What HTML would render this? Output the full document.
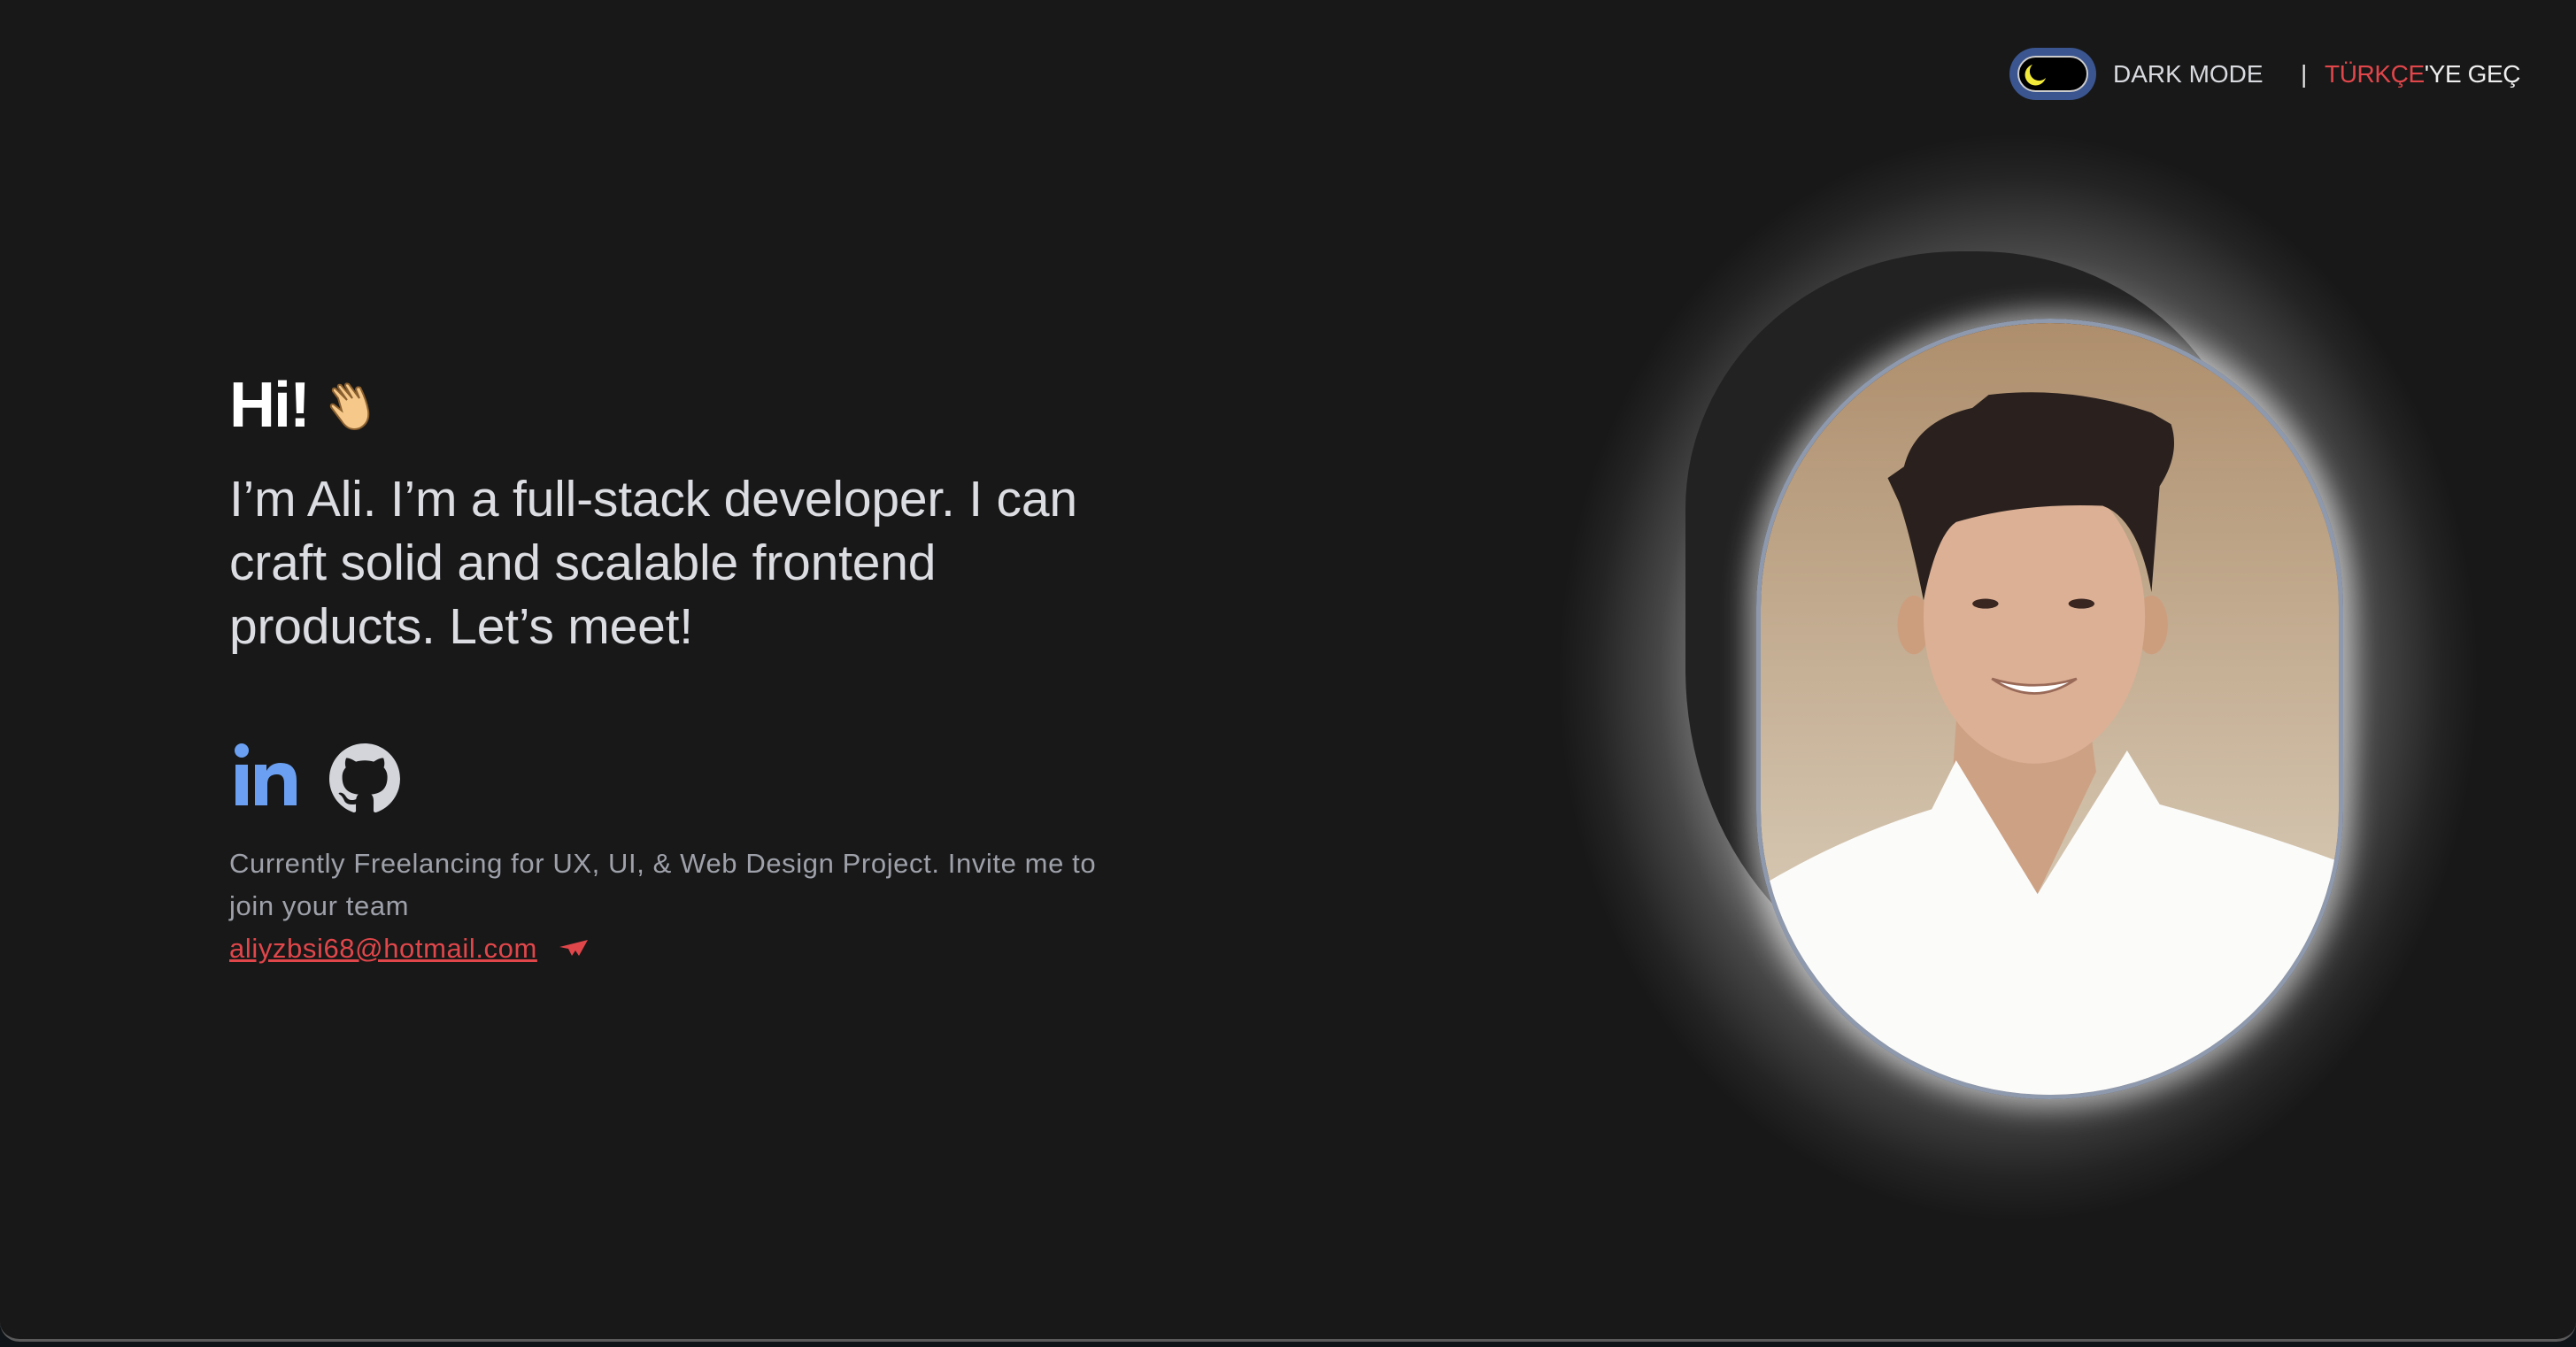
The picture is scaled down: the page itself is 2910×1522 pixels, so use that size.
<!DOCTYPE html>
<html><head><meta charset="utf-8"><style>
html,body{margin:0;padding:0;background:#0f1418;}
body{width:2910px;height:1522px;position:relative;overflow:hidden;font-family:"Liberation Sans",sans-serif;}
.win{position:absolute;left:0;top:0;width:2910px;height:1516px;background:#181818;border-radius:0 0 22px 22px;border-bottom:3px solid #5a5a5a;box-sizing:border-box;overflow:hidden;}
.abs{position:absolute;white-space:nowrap;}
.glow{position:absolute;left:1760px;top:150px;width:1040px;height:1230px;border-radius:50%;background:radial-gradient(ellipse closest-side at center,rgba(255,255,255,0.55) 0%,rgba(255,255,255,0.5) 62%,rgba(255,255,255,0.2) 78%,rgba(255,255,255,0.05) 92%,rgba(255,255,255,0) 100%);}
.back{position:absolute;left:1904px;top:284px;width:640px;height:840px;background:#222;border-radius:320px 320px 330px 330px/300px 300px 380px 380px;}
.oval{position:absolute;left:1984px;top:360px;width:663px;height:882px;border:5px solid #8e99ad;box-sizing:border-box;border-radius:50%/37%;overflow:hidden;box-shadow:0 0 30px 10px rgba(255,255,255,0.55);}
</style></head><body>
<div class="win">
<div class="abs" style="left:2270px;top:54px;width:98px;height:59px;border-radius:30px;background:#3a5590;"></div>
<div class="abs" style="left:2279px;top:63px;width:80px;height:41px;border-radius:21px;background:#000;border:2px solid #ccc;box-sizing:border-box;"></div>
<svg class="abs" style="left:2284px;top:70px" width="30" height="30" viewBox="0 0 30 30"><path d="M12 3 A12 12 0 1 0 27 18 A9 9 0 0 1 12 3Z" fill="#f2ea3a"/></svg>
<div class="abs" style="left:2387px;top:68px;font-size:28px;color:#d8dadf;line-height:32px;">DARK MODE</div>
<div class="abs" style="left:2599px;top:68px;font-size:28px;color:#e6e6e6;line-height:32px;">|</div>
<div class="abs" style="left:2626px;top:68px;font-size:28px;color:#eee;line-height:32px;letter-spacing:-0.4px;"><span style="color:#e0464a">TÜRKÇE</span>'YE GEÇ</div>

<div class="abs" style="left:259px;top:418px;font-size:72px;font-weight:bold;color:#fff;line-height:80px;letter-spacing:-2px;">Hi!</div>
<svg class="abs" style="left:368px;top:430px" width="60" height="60" viewBox="0 0 60 60"><path d="M14 20 L8 12 Q7 8 11 9 L24 22 L14 8 Q13 4 17 5 L30 20 L22 6 Q22 2 26 4 L38 20 L34 10 Q35 6 39 8 Q46 22 48 34 Q50 48 38 54 Q26 58 18 46 L6 30 Q5 26 9 27 L18 34Z" fill="#f6c98a" stroke="#8a6030" stroke-width="2"/></svg>
<div class="abs" style="left:259px;top:528px;font-size:57px;color:#dcdde2;line-height:72px;letter-spacing:-0.2px;">I’m Ali. I’m a full-stack developer. I can<br>craft solid and scalable frontend<br>products. Let’s meet!</div>

<svg class="abs" style="left:265px;top:840px" width="72" height="72" viewBox="0 0 72 72"><circle cx="8" cy="8" r="8" fill="#6a9ff2"/><rect x="1" y="24" width="14" height="46" fill="#6a9ff2"/><path d="M23 24 H36 V31 Q41 22 52 22 Q70 22 70 42 V70 H56 V45 Q56 35 48 35 Q37 35 37 46 V70 H23Z" fill="#6a9ff2"/></svg>
<svg class="abs" style="left:372px;top:840px" width="80" height="80" viewBox="0 0 16 16"><path fill="#d3d5da" d="M8 0C3.580 0 0 3.58 0 8c0 3.54 2.29 6.53 5.470 7.59.4.07.55-.17.55-.38 0-.19-.01-.82-.01-1.49-2.01.37-2.53-.49-2.69-.94-.09-.23-.48-.94-.82-1.13-.28-.15-.68-.52-.01-.53.63-.01 1.08.58 1.23.82.72 1.21 1.87.87 2.33.66.07-.52.28-.87.51-1.07-1.780-.2-3.64-.89-3.64-3.95 0-.87.31-1.59.82-2.15-.08-.2-.36-1.02.08-2.12 0 0 .67-.21 2.2.82.64-.18 1.32-.27 2-.27.68 0 1.36.09 2 .27 1.53-1.04 2.2-.82 2.2-.82.44 1.1.16 1.92.08 2.12.51.56.82 1.270.82 2.15 0 3.07-1.87 3.75-3.65 3.95.29.25.54.73.54 1.48 0 1.07-.01 1.93-.01 2.2 0 .21.15.46.55.38A8.013 8.013 0 0016 8c0-4.42-3.58-8-8-8z"/></svg>

<div class="abs" style="left:259px;top:952px;font-size:31px;color:#9ea1aa;line-height:48px;letter-spacing:0.6px;">Currently Freelancing for UX, UI, &amp; Web Design Project. Invite me to<br>join your team<br><span style="color:#e0464a;text-decoration:underline;">aliyzbsi68@hotmail.com</span></div>
<svg class="abs" style="left:630px;top:1060px" width="36" height="24" viewBox="0 0 36 24"><path d="M2 10 L34 2 L24 20 L20 14 L16 20 L12 12Z" fill="#e0464a"/></svg>

<div class="glow"></div>
<div class="back"></div>
<div class="oval">
<svg width="653" height="872" viewBox="0 0 355 473" preserveAspectRatio="none">
<defs><linearGradient id="bg" x1="0" y1="0" x2="0" y2="1"><stop offset="0" stop-color="#ae8e6c"/><stop offset="0.7" stop-color="#d3c3ad"/><stop offset="1" stop-color="#dcd0c0"/></linearGradient></defs>
<rect width="355" height="473" fill="url(#bg)"/>
<path d="M122 215 L198 215 L206 275 L170 350 L118 275Z" fill="#cda184"/>
<path d="M0 345 Q50 315 105 298 L120 268 L170 350 L225 262 L245 295 Q300 310 355 330 L355 473 L0 473Z" fill="#fbfbfa"/>
<ellipse cx="94" cy="185" rx="10" ry="18" fill="#cc9e7e"/>
<ellipse cx="240" cy="185" rx="10" ry="18" fill="#cc9e7e"/>
<ellipse cx="168" cy="180" rx="68" ry="90" fill="#dcb095"/>
<path d="M78 95 L88 88 Q95 60 130 52 L140 44 Q190 38 240 55 L252 62 Q258 80 245 100 L240 165 Q232 120 210 112 Q160 110 120 122 Q108 130 100 170 Q92 130 85 110Z" fill="#2a211e"/>
<ellipse cx="138" cy="172" rx="8" ry="3" fill="#3a2620"/>
<ellipse cx="197" cy="172" rx="8" ry="3" fill="#3a2620"/>
<path d="M142 218 Q168 226 194 218 Q168 236 142 218Z" fill="#fff" stroke="#9a6a58" stroke-width="1.5"/>
</svg>
</div>
</div>
</body></html>
